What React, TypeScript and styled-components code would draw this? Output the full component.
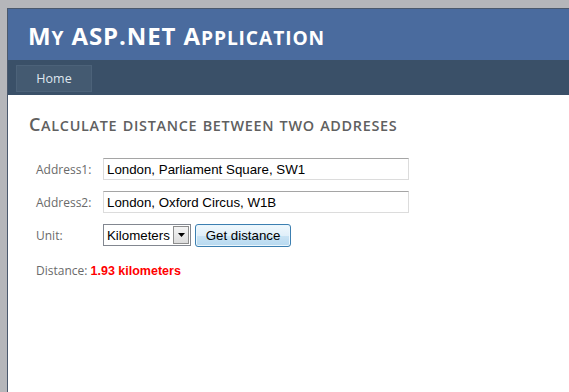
import React from "react";
import styled, { createGlobalStyle } from "styled-components";

const Global = createGlobalStyle`
  html, body { margin: 0; padding: 0; background: #b5b6ba; height: 100%; overflow: hidden; }
  #root { height: 100%; }
`;

const Page = styled.div`
  margin: 8px 0 0 7px;
  height: calc(100% - 8px);
  border-left: 1px solid #4a586c;
  border-top: 1px solid #4a586c;
  background: #fff;
  display: flex;
  flex-direction: column;
  font-family: "Open Sans", "Liberation Sans", sans-serif;
`;

const Header = styled.header`
  height: 51px;
  background: #4a6b9e;
  display: flex;
  align-items: center;
  padding-left: 20px;
`;

const Title = styled.h1`
  margin: 0;
  font-size: 24px;
  font-weight: 700;
  color: #fff;
  line-height: 1;
  padding-top: 2px;
  letter-spacing: 0.9px;
`;

const Small = styled.span`
  font-size: 0.8em;
  text-transform: uppercase;
  line-height: 0;
`;

const Nav = styled.nav`
  height: 35px;
  background: #3a5068;
  display: flex;
  align-items: center;
  padding-left: 8px;
`;

const Tab = styled.a`
  width: 74px;
  height: 25px;
  margin-top: 1px;
  border: 1px solid #4c6279;
  background: #445a71;
  color: #dfe6ee;
  font-size: 12.5px;
  display: flex;
  align-items: center;
  justify-content: center;
`;

const Main = styled.main`
  flex: 1;
  padding: 17px 0 0 21px;
`;

const Heading = styled.h2`
  margin: 0 0 22px;
  height: 24px;
  font-size: 18px;
  font-weight: 600;
  color: #606060;
  line-height: 24px;
  letter-spacing: 0.7px;
`;

const Form = styled.div`
  padding-left: 7px;
  display: flex;
  flex-direction: column;
  gap: 11px;
`;

const Row = styled.div`
  display: flex;
  align-items: center;
  height: 22px;
`;

const Label = styled.span`
  width: 67px;
  color: #6a6a6a;
  font-size: 12px;
`;

const TextInput = styled.input`
  box-sizing: border-box;
  width: 306px;
  height: 22px;
  margin: 0;
  padding: 0 3px;
  border: 1px solid #dcdcdc;
  border-top-color: #a5a5a5;
  font-family: "Liberation Sans", Arial, sans-serif;
  font-size: 13.3px;
  color: #000;
  outline: none;
`;

const SelectBox = styled.div`
  box-sizing: border-box;
  width: 88px;
  height: 22px;
  border: 1px solid #828790;
  display: flex;
  align-items: center;
  justify-content: space-between;
  padding: 0 1px 0 3px;
  font-family: "Liberation Sans", Arial, sans-serif;
  font-size: 13.3px;
  color: #000;
  background: #fff;
`;

const Arrow = styled.span`
  box-sizing: border-box;
  width: 16px;
  height: 18px;
  border: 1px solid #8d8d8d;
  background: linear-gradient(#f4f4f4, #dcdcdc);
  display: flex;
  align-items: center;
  justify-content: center;
`;

const Button = styled.button`
  box-sizing: border-box;
  margin-left: 4px;
  width: 96px;
  height: 23px;
  border: 1px solid #3c7fb1;
  border-radius: 3px;
  background: linear-gradient(#f0f8fd 0%, #e0eff9 50%, #c9e3f4 51%, #b7d9f0 100%);
  box-shadow: inset 0 0 0 1px #eaf6fd;
  font-family: "Liberation Sans", Arial, sans-serif;
  font-size: 13.3px;
  color: #000;
  padding: 0;
`;

const Result = styled.div`
  margin-top: 5px;
  font-size: 12px;
  color: #6a6a6a;
`;

const Value = styled.span`
  color: #ff0000;
  font-weight: 700;
  font-size: 12.5px;
  font-family: "Liberation Sans", Arial, sans-serif;
`;

function SmallCaps({ text }: { text: string }) {
  const parts: React.ReactNode[] = [];
  let buf = "";
  let lower = false;
  const flush = (k: number) => {
    if (!buf) return;
    parts.push(lower ? <Small key={k}>{buf}</Small> : <React.Fragment key={k}>{buf}</React.Fragment>);
    buf = "";
  };
  [...text].forEach((ch, i) => {
    const isLower = ch !== ch.toUpperCase();
    if (isLower !== lower) {
      flush(i);
      lower = isLower;
    }
    buf += ch;
  });
  flush(text.length);
  return <>{parts}</>;
}

export default function App() {
  return (
    <>
      <Global />
      <Page>
        <Header>
          <Title>
            <SmallCaps text="My ASP.NET Application" />
          </Title>
        </Header>
        <Nav>
          <Tab>Home</Tab>
        </Nav>
        <Main>
          <Heading>
            <SmallCaps text="Calculate distance between two addreses" />
          </Heading>
          <Form>
            <Row>
              <Label>Address1:</Label>
              <TextInput defaultValue="London, Parliament Square, SW1" />
            </Row>
            <Row>
              <Label>Address2:</Label>
              <TextInput defaultValue="London, Oxford Circus, W1B" />
            </Row>
            <Row>
              <Label>Unit:</Label>
              <SelectBox>
                Kilometers
                <Arrow>
                  <svg width="7" height="4" viewBox="0 0 7 4">
                    <path d="M0 0h7L3.5 4z" fill="#000" />
                  </svg>
                </Arrow>
              </SelectBox>
              <Button>Get distance</Button>
            </Row>
            <Result>
              Distance: <Value>1.93 kilometers</Value>
            </Result>
          </Form>
        </Main>
      </Page>
    </>
  );
}
